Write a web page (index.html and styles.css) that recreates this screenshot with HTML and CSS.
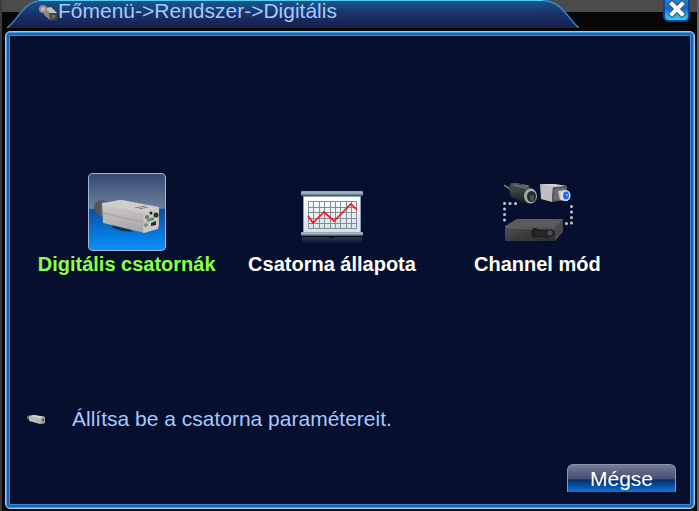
FILE: index.html
```html
<!DOCTYPE html>
<html lang="hu">
<head>
    <meta charset="UTF-8">
    <meta name="viewport" content="width=device-width, initial-scale=1.0">
    <title>Digitális</title>
    <link rel="stylesheet" href="styles.css">
</head>
<body>
    <div class="window">
        <header class="titlebar">
            <svg class="tab-cap" width="34" height="28" viewBox="0 0 34 28" aria-hidden="true">
                <defs>
                    <linearGradient id="tabFill" x1="0" y1="0" x2="0" y2="28" gradientUnits="userSpaceOnUse">
                        <stop offset="0" stop-color="#14598a"/>
                        <stop offset="0.5" stop-color="#1a3169"/>
                        <stop offset="1" stop-color="#171f4c"/>
                    </linearGradient>
                </defs>
                <path d="M0 28C11 20 17 1 34 0V28Z" fill="url(#tabFill)"/>
                <path d="M0 28C11 20 17 1 34 0.5" fill="none" stroke="#3b86cc" stroke-width="1.5"/>
            </svg>
            <div class="tab">
                <svg class="tab-icon" width="19" height="16" viewBox="0 0 19 16" aria-hidden="true">
                    <path d="M5 3L12 3L18 8L18 14L11 15L5 10Z" fill="#8b8a85"/>
                    <path d="M6 3L12 2L18 8L12 9Z" fill="#c5c2bb"/>
                    <path d="M10 8L18 8V14L11 15Z" fill="#494744"/>
                    <circle cx="4" cy="4" r="4" fill="#9c8b8c"/>
                    <circle cx="4" cy="4" r="2" fill="#c9bcb8"/>
                    <rect x="13" y="10" width="3" height="3" fill="#77736b"/>
                </svg>
                <h1>Főmenü-&gt;Rendszer-&gt;Digitális</h1>
            </div>
            <svg class="tab-cap" width="36" height="28" viewBox="0 0 36 28" aria-hidden="true">
                <path d="M0 0C19 1 24 18 36 28H0Z" fill="url(#tabFill)"/>
                <path d="M0 0.5C19 1 24 18 36 28" fill="none" stroke="#3b86cc" stroke-width="1.5"/>
            </svg>
            <button type="button" class="close" aria-label="Bezárás">
                <svg width="18" height="18" viewBox="0 0 18 18" aria-hidden="true">
                    <path d="M4 4L14 14M14 4L4 14" stroke="#3b566c" stroke-width="6" stroke-linecap="square"/>
                    <path d="M4 4L14 14M14 4L4 14" stroke="#fff" stroke-width="4" stroke-linecap="square"/>
                </svg>
            </button>
        </header>

        <main class="panel">
            <nav class="menu">
                <button type="button" class="item active">
                    <span class="icon">
                        <svg width="78" height="78" viewBox="0 0 78 78" aria-hidden="true">
                            <defs>
                                <linearGradient id="camSide" x1="0" y1="0" x2="0" y2="1">
                                    <stop offset="0" stop-color="#d3d0ce"/>
                                    <stop offset="0.5" stop-color="#bbb8b8"/>
                                    <stop offset="1" stop-color="#a6a5a8"/>
                                </linearGradient>
                            </defs>
                            <path d="M24 51L43 56L44 59L34 58L25 55Z" fill="#17344f"/>
                            <ellipse cx="13" cy="35" rx="7" ry="8" fill="#50545c"/>
                            <path d="M12 27L20 28L18 43L12 43Z" fill="#5b5f66"/>
                            <path d="M14 30L28 28L34 27L71 34L71 54L57 60L15 50Z" fill="url(#camSide)"/>
                            <path d="M15 31L31 27L71 35L56 40Z" fill="#d0cdcb"/>
                            <path d="M15 40L55 49" stroke="#a3a1a3" fill="none"/>
                            <path d="M56 40L71 35L70 56L55 60Z" fill="#c9c8c5"/>
                            <path d="M47 35L57 33M51 36L60 34" stroke="#817f7d"/>
                            <circle cx="63" cy="40" r="1.5" fill="#222"/>
                            <circle cx="68" cy="42" r="2.5" fill="#273238"/>
                            <circle cx="59" cy="44" r="2" fill="#6d6e6d"/>
                            <path d="M59 46L66 44V47L59 49Z" fill="#48a45a"/>
                            <path d="M63 50L68 48V52L63 53Z" fill="#202a2c"/>
                            <circle cx="58" cy="52" r="2" fill="#888a88"/>
                        </svg>
                    </span>
                    <span class="label">Digitális csatornák</span>
                </button>

                <button type="button" class="item">
                    <span class="icon">
                        <svg width="78" height="78" viewBox="0 0 78 78" aria-hidden="true">
                            <defs>
                                <linearGradient id="bar" x1="0" y1="0" x2="0" y2="1">
                                    <stop offset="0" stop-color="#8ea4b4"/>
                                    <stop offset="0.4" stop-color="#a6b9c6"/>
                                    <stop offset="1" stop-color="#394c60"/>
                                </linearGradient>
                                <linearGradient id="sheet" x1="0" y1="0" x2="0" y2="1">
                                    <stop offset="0" stop-color="#fff"/>
                                    <stop offset="1" stop-color="#cfdfea"/>
                                </linearGradient>
                                <linearGradient id="mirror" x1="0" y1="0" x2="0" y2="1">
                                    <stop offset="0" stop-color="#293c55"/>
                                    <stop offset="1" stop-color="#070f2e"/>
                                </linearGradient>
                            </defs>
                            <rect x="9" y="64" width="60" height="7" fill="url(#mirror)"/>
                            <rect x="10" y="22" width="58" height="38" fill="#8ca1b2"/>
                            <rect x="11" y="24" width="56" height="36" fill="url(#sheet)"/>
                            <path d="M15.500 28.500H63.500V55.500H15.500ZM20.500 28V56M26.500 28V56M31.500 28V56M37.500 28V56M42.500 28V56M47.500 28V56M53.500 28V56M58.500 28V56M15 34.500H64M15 39.500H64M15 45.500H64M15 50.500H64" fill="none" stroke="#858c92"/>
                            <path d="M15 43L20 50L31 39L41 48L58 31L64 37" fill="none" stroke="#f8161b" stroke-width="1.7"/>
                            <rect x="8" y="18" width="62" height="5" rx="1" fill="url(#bar)"/>
                            <rect x="8" y="59" width="62" height="4" rx="1" fill="url(#bar)"/>
                            <path d="M9 63.500H69" stroke="#05080f"/>
                            <rect x="36" y="63" width="5" height="2" fill="#05080f"/>
                        </svg>
                    </span>
                    <span class="label">Csatorna állapota</span>
                </button>

                <button type="button" class="item">
                    <span class="icon">
                        <svg width="78" height="78" viewBox="0 0 78 78" aria-hidden="true">
                            <defs>
                                <linearGradient id="tube" x1="0" y1="0" x2="0" y2="1">
                                    <stop offset="0" stop-color="#4a5556"/>
                                    <stop offset="0.5" stop-color="#343b3c"/>
                                    <stop offset="1" stop-color="#121719"/>
                                </linearGradient>
                                <linearGradient id="dvr" x1="0" y1="0" x2="1" y2="1">
                                    <stop offset="0" stop-color="#5f5f62"/>
                                    <stop offset="0.5" stop-color="#3d3d3f"/>
                                    <stop offset="1" stop-color="#2b2b2d"/>
                                </linearGradient>
                            </defs>
                            <path d="M6 12L12 16" stroke="#85898e" stroke-width="1.5"/>
                            <path d="M13 10L20 10L36 16L32 31L27 31L13 24Q9 16 13 10Z" fill="url(#tube)"/>
                            <path d="M16 12L28 15L30 13L24 12" fill="none" stroke="#6b7473" stroke-width="1.5"/>
                            <ellipse cx="32.500" cy="23" rx="6.500" ry="7.500" fill="#a5aaa8"/>
                            <ellipse cx="33.500" cy="23.500" rx="4.500" ry="5.500" fill="#252c2c"/>
                            <ellipse cx="34" cy="25" rx="2" ry="3" fill="#4d5452"/>
                            <path d="M42 11L57 11L69 13L55 15Z" fill="#cfcfce"/>
                            <path d="M42 11L55 14L54 29L43 26Z" fill="#bebdbf"/>
                            <path d="M55 14L69 13V27L54 29Z" fill="#595a60"/>
                            <path d="M57 16L67 15V26L56 27Z" fill="#6c6c73"/>
                            <path d="M60 18L68 17L70 28L62 27Z" fill="#c7cbd1"/>
                            <ellipse cx="67.500" cy="22.500" rx="5" ry="5.500" fill="#d9e0eb"/>
                            <ellipse cx="68" cy="22.500" rx="3" ry="4" fill="#2665e6"/>
                            <circle cx="69" cy="22" r="1" fill="#7fc4ff"/>
                            <path d="M6.500 30.500H18M6.500 36V48M73.500 33.500V50.500H66" fill="none" stroke="#c2c6d0" stroke-width="3" stroke-linecap="round" stroke-dasharray="0.100 5.400"/>
                            <path d="M19 46H65V52L57 68H7V53Z" fill="url(#dvr)"/>
                            <path d="M19 46H65L57 55L7 54Z" fill="#5b5b5d"/>
                            <path d="M57 55L65 47V59L57 68Z" fill="#49494b"/>
                            <path d="M8 54L34 56H57" stroke="#6a6a6d" fill="none"/>
                            <ellipse cx="37" cy="60" rx="4" ry="5" fill="#202123"/>
                            <path d="M37 57H54L57 61L49 64L39 63" fill="#29292c" stroke="#161719"/>
                            <circle cx="52" cy="60" r="2.500" fill="#505053"/>
                        </svg>
                    </span>
                    <span class="label">Channel mód</span>
                </button>
            </nav>

            <div class="hint">
                <svg width="19" height="9" viewBox="0 0 19 9" aria-hidden="true">
                    <path d="M0 1L3 0V5L0 4Z" fill="#5b5d63"/>
                    <path d="M2 1L7 0L18 2V8L13 9L2 6Z" fill="#b9b8b4"/>
                    <path d="M3 1L7 0L18 2L13 3Z" fill="#d8d7d2"/>
                    <path d="M14 3L18 2V8L14 9Z" fill="#92968d"/>
                    <rect x="15" y="4" width="2" height="2" fill="#3e7a52"/>
                </svg>
                <p>Állítsa be a csatorna paramétereit.</p>
            </div>

            <div class="actions">
                <button type="button" class="btn">Mégse</button>
            </div>
        </main>
    </div>
</body>
</html>
```
FILE: styles.css
```css
* {
    margin: 0;
    padding: 0;
    box-sizing: border-box;
    font-family: 'Liberation Sans', Arial, sans-serif;
}

body {
    background: #050505;
}

.window {
    display: flex;
    flex-direction: column;
    min-height: 100vh;
    padding: 0 2px 2px 3px;
    background: #070707;
    border-left: 2px solid #3c3a3c;
    border-right: 2px solid #666;
}

/* title bar */
.titlebar {
    display: flex;
    align-items: flex-start;
    height: 31px;
    margin: 0 -2px 0 -3px;
    padding: 0 7px 0 5px;
    background: linear-gradient(#4b4b4b 12px, #070707 12px);
}

.tab-cap {
    display: block;
    flex: none;
}

.tab {
    display: flex;
    align-items: flex-start;
    flex: 0 1 504px;
    height: 28px;
    margin-left: -2px;
    border-top: 1px solid #55cdf5;
    background: linear-gradient(#14598a, #1a3169 50%, #171f4c);
}

.tab-icon {
    flex: none;
    margin-top: 4px;
}

.tab h1 {
    color: #a5c8ff;
    font-size: 21px;
    font-weight: normal;
    line-height: 20px;
    white-space: nowrap;
}

.close {
    display: flex;
    align-items: center;
    justify-content: center;
    width: 27px;
    height: 22px;
    margin-left: auto;
    padding-bottom: 2px;
    border: 2px solid #0b45a8;
    border-top: none;
    border-radius: 0 0 6px 6px;
    background: linear-gradient(#1d83d8, #1264c4 40%, #35d5f5);
    cursor: pointer;
}

.close svg {
    flex: none;
}

/* main panel */
.panel {
    display: flex;
    flex-direction: column;
    flex: 1;
    padding: 141px 18px 16px 14px;
    border: 1px solid #9ccdf5;
    border-radius: 5px;
    background: #060f2e;
    box-shadow: inset 0 0 0 1px #4a9ae2, inset 0 0 0 3px #1b63b5, inset 0 0 0 4px #3787d3;
}

.menu {
    display: grid;
    grid-template-columns: repeat(3, 1fr);
    padding: 0 36px 0 4px;
}

.item {
    display: flex;
    flex-direction: column;
    align-items: center;
    border: none;
    background: none;
    color: #fff;
    font-size: 20px;
    font-weight: bold;
    line-height: 26px;
    white-space: nowrap;
    cursor: pointer;
}

.icon {
    width: 78px;
    height: 78px;
    border-radius: 5px;
}

.icon svg {
    display: block;
}

.item.active {
    color: #8cff43;
}

.item.active .icon {
    background: linear-gradient(#34496f, #6c7f9f 45%, #0d4f9c 47%, #0674d6 75%, #0b91fa);
    box-shadow: inset 0 0 0 1px #9eb6d2;
}

.hint {
    display: flex;
    align-items: center;
    gap: 26px;
    margin-top: auto;
    padding: 0 7px;
    color: #a5c8ff;
    font-size: 21px;
    line-height: 24px;
}

.actions {
    display: flex;
    justify-content: flex-end;
    margin-top: 33px;
}

.btn {
    width: 109px;
    height: 28px;
    border: 1px solid #8d96ae;
    border-bottom: none;
    border-radius: 6px 6px 0 0;
    background: linear-gradient(#747b95, #454f73 50%, #082d6d 56%, #0874d8);
    color: #fff;
    font-size: 21px;
    line-height: 26px;
    cursor: pointer;
}
```
